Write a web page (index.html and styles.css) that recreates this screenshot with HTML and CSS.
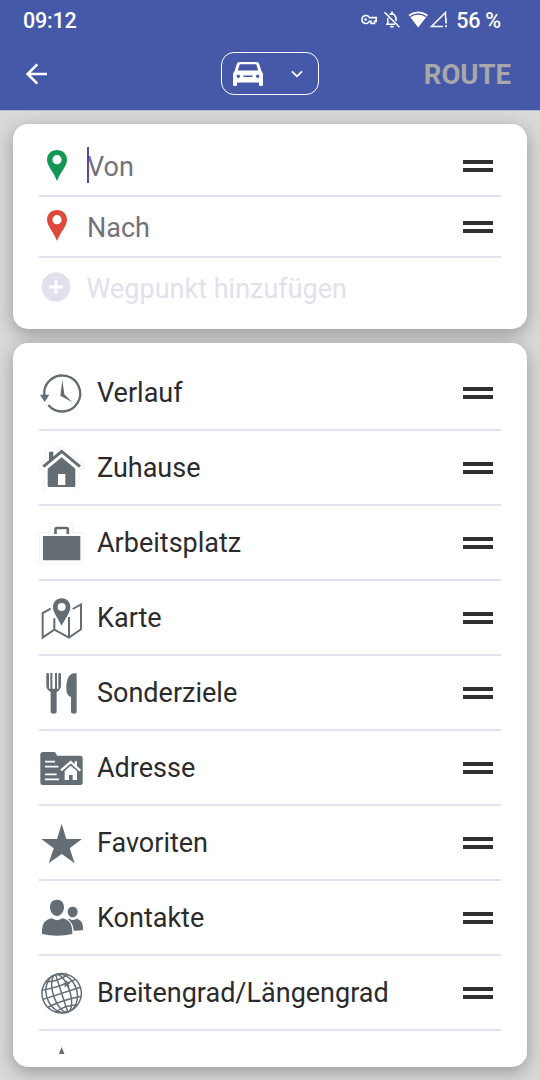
FILE: index.html
```html
<!DOCTYPE html>
<html lang="de">
<head>
<meta charset="UTF-8" />
<meta name="viewport" content="width=device-width, initial-scale=1.0" />
<title>Route</title>
<link rel="stylesheet" href="styles.css">
</head>
<body>

<header>
<!-- Statusleiste -->
<div class="status">
<span>09:12</span>
<div class="status-right">
<svg class="status-icons" viewBox="0 0 88 20" fill="none" stroke="#fff">
<path d="M9.4 7.6A4 4 0 1 0 9.4 11.4H11V13.5H14.5V11.4H16.2V7.6Z" stroke-width="1.6"/>
<circle cx="5.6" cy="9.5" r="1.3" fill="#fff" stroke="none"/>
<path d="M24.5 2.3L39.5 17.3" stroke-width="1.6"/>
<path d="M29.5 4.7Q32 3 34.3 4.9Q36 6.4 36 10V11M27.8 8V14.3H35M26 14.3H28" stroke-width="1.6"/>
<path d="M32 1.5V4M30.3 16.6H33.7" stroke-width="1.8"/>
<path d="M48.500 4.8Q58.200 -1.900 68 4.800L58.200 17.500Z" fill="#fff" stroke="none"/>
<path d="M50.300 6.600Q58.200 1.400 66.200 6.600" stroke="#4559a8" stroke-width="1.300"/>
<path d="M85.500 8V2.500L71.500 16.500H83" stroke-width="1.500"/>
<path d="M86 8V13.500M86 15V17.200" stroke-width="1.600"/>
</svg>
<span>56 %</span>
</div>
</div>
<!-- Navigation -->
<div class="toolbar">
<svg class="back" viewBox="0 0 24 24"><path d="M22 12H3M12.300 2.300L2.600 12L12.300 21.700" fill="none" stroke="#fff" stroke-width="2.500"/></svg>
<button class="vehicle">
<svg class="car" viewBox="0 0 30 26" fill="#fff">
<path fill-rule="evenodd" d="M6.500 1H23.500Q25.500 1 26 2.500L28.600 10.500Q30 11.500 30 13.500V23.500Q30 25 28.500 25H27.500Q26 25 26 23.500V21.500H4V23.500Q4 25 2.500 25H1.500Q0 25 0 23.500V13.500Q0 11.500 1.400 10.500L4 2.500Q4.500 1 6.500 1ZM6.800 3.200L4.700 9.500H25.300L23.200 3.200ZM5.300 13.500A1.700 1.700 0 1 0 5.300 16.900A1.700 1.700 0 1 0 5.300 13.500ZM24.700 13.500A1.700 1.700 0 1 0 24.700 16.900A1.700 1.700 0 1 0 24.700 13.500ZM10.500 14.400V15.900H19.500V14.400Z"/>
</svg>
<svg class="chevron" viewBox="0 0 12 8"><path d="M1 1.300L6 6.300L11 1.300" fill="none" stroke="#fff" stroke-width="1.800"/></svg>
</button>
<span class="route">ROUTE</span>
</div>
</header>

<main>

<!-- Wegpunkte -->
<section class="card waypoints">
<div class="point">
<svg class="pin green" viewBox="0 0 22 33"><path fill-rule="evenodd" d="M11 1C5.300 1 1 5.200 1 10.500C1 17 7 22 11 32C15 22 21 17 21 10.500C21 5.200 16.700 1 11 1ZM11 6.100A4.600 4.600 0 1 1 11 15.300A4.600 4.600 0 1 1 11 6.100Z"/></svg>
<span class="field focus">Von</span>
<i class="handle"></i>
</div>
<div class="point">
<svg class="pin red" viewBox="0 0 22 33"><path fill-rule="evenodd" d="M11 1C5.300 1 1 5.200 1 10.500C1 17 7 22 11 32C15 22 21 17 21 10.500C21 5.200 16.700 1 11 1ZM11 6.100A4.600 4.600 0 1 1 11 15.300A4.600 4.600 0 1 1 11 6.100Z"/></svg>
<span class="field">Nach</span>
<i class="handle"></i>
</div>
<div class="point add">
<svg class="plus" viewBox="0 0 30 30"><circle cx="15" cy="15" r="14.400" fill="#e2e0ec"/><path d="M15 7.700V22.300M7.700 15H22.300" stroke="#fff" stroke-width="2.800"/></svg>
<span class="field">Wegpunkt hinzufügen</span>
</div>
</section>

<!-- Ziele -->
<section class="card places">
<div class="list">
<div class="row">
<svg class="icon" viewBox="0 0 135 135">
<path d="M16 77A54 54 0 1 1 28 105" fill="none" stroke="#646c74" stroke-width="7"/>
<path d="M3 74H31L17 96ZM70 29L64 77L100 97L76 73Z"/>
</svg>
<span>Verlauf</span>
<i class="handle"></i>
</div>
<div class="row">
<svg class="icon" viewBox="0 0 135 135">
<path class="halo" d="M13 65L30 50V20H43V38L68 19L123 65L109 70V126H26V70Z"/>
<path class="halo-inner" d="M13 65L30 50V20H43V38L68 19L123 65L109 70V126H26V70Z"/>
<path d="M30 20H43V38L30 50Z"/>
<path d="M13 65L68 19L123 65" fill="none" stroke="#646c74" stroke-width="9"/>
<path fill-rule="evenodd" d="M68 37L109 71V122Q109 126 105 126H30Q26 126 26 122V71ZM57 87V120H79V87Z"/>
</svg>
<span>Zuhause</span>
<i class="handle"></i>
</div>
<div class="row">
<svg class="icon" viewBox="0 0 135 135">
<path class="halo" d="M12 48H46V20H90V48H124V121H12Z"/>
<path class="halo-inner" d="M12 48H46V20H90V48H124V121H12Z"/>
<path d="M12 48H124V121H12Z"/>
<path d="M49.500 42V28Q49.500 24 53 24H83Q86.500 24 86.500 28V42" fill="none" stroke="#646c74" stroke-width="8"/>
</svg>
<span>Arbeitsplatz</span>
<i class="handle"></i>
</div>
<div class="row">
<svg class="icon" viewBox="0 0 135 135">
<path d="M35 41L11 54V128L46 104L90 128L126 103V28L101 42M46 70V104M90 66V128" fill="none" stroke="#646c74" stroke-width="6"/>
<path fill-rule="evenodd" d="M68 10C52 10 42 21 42 36C42 52 55 67 68 92C81 67 94 52 94 36C94 21 84 10 68 10ZM68 24A12 12 0 1 1 68 48A12 12 0 1 1 68 24Z"/>
</svg>
<span>Karte</span>
<i class="handle"></i>
</div>
<div class="row">
<svg class="icon" viewBox="0 0 135 135">
<path d="M22 12Q22 9 26 9Q30 9 30 12V56H34V9H40V56H48V9H54V56H58V12Q58 9 62 9Q66 9 66 12V48Q66 59 53 66V127Q53 131 44 131Q35 131 35 127V66Q22 59 22 48Z"/>
<path d="M113 10V127Q113 131 104.500 131Q96 131 96 127V81Q82 77 82 56C82 28 88 7 113 10Z"/>
</svg>
<span>Sonderziele</span>
<i class="handle"></i>
</div>
<div class="row">
<svg class="icon" viewBox="0 0 135 135">
<path d="M12 21H45Q50 21 52 27L54 32H124Q131 32 131 39V113Q131 120 124 120H11Q4 120 4 113V29Q4 21 12 21Z"/>
<path d="M18 50H48M18 65H58M18 88H53M18 103H60" stroke="#fff" stroke-width="5"/>
<path d="M66 76L95 51L124 77" fill="none" stroke="#fff" stroke-width="7"/>
<path d="M95 62L114 78V105H101V90H90V105H77V78ZM107 49H114V65L107 59Z" fill="#fff"/>
</svg>
<span>Adresse</span>
<i class="handle"></i>
</div>
<div class="row">
<svg class="icon" viewBox="0 0 135 135">
<path d="M68 11L82 57H129L92 85L107 130L68 102L29 130L44 85L7 57H54Z"/>
</svg>
<span>Favoriten</span>
<i class="handle"></i>
</div>
<div class="row">
<svg class="icon" viewBox="0 0 135 135">
<path d="M54 14C40 14 33 23 33 37C33 51 43 63 54 63C65 63 75 51 75 37C75 23 68 14 54 14ZM9 117C8 90 14 75 38 70Q54 81 71 70C93 75 101 90 100 117Q55 127 9 117Z"/>
<path d="M101 35C91 35 86 41 86 50C86 59 93 67 101 67C109 67 116 59 116 50C116 41 111 35 101 35ZM87 73L91 71Q101 79 112 71C127 75 133 84 132 105Q118 108 104 107Q103 85 87 73Z"/>
</svg>
<span>Kontakte</span>
<i class="handle"></i>
</div>
<div class="row">
<svg class="icon" viewBox="0 0 135 135">
<g transform="rotate(-18 68 70)" fill="none" stroke="#646c74" stroke-width="4.500">
<circle cx="68" cy="70" r="59"/>
<path d="M68 11V129M9 70H127M16 43Q68 51 120 43M16 97Q68 89 120 97M34 22Q68 34 102 22M34 118Q68 106 102 118"/>
<ellipse cx="68" cy="70" rx="25" ry="59"/>
<ellipse cx="68" cy="70" rx="46" ry="59"/>
</g>
<path d="M83 30L86 38L94 38L89 44L92 52L83 48L75 52L78 44L72 38L80 38Z"/>
</svg>
<span>Breitengrad/Längengrad</span>
<i class="handle"></i>
</div>
<div class="row">
<svg class="icon" viewBox="0 0 135 135"><path d="M68 6L116 128L68 104L20 128Z"/></svg>
</div>
</div>
</section>

</main>

</body>
</html>
```
FILE: styles.css
```css
* {
  box-sizing: border-box;
}
body {
  margin: 0;
  height: 1080px;
  overflow: hidden;
  font-family: Roboto, "Liberation Sans", sans-serif;
  background: #d9d9d9;
  color: #2b2b2d;
}
svg {
  display: block;
  flex: none;
}

/* Kopfbereich */
header {
  height: 111px;
  background: #4559a8;
  border-bottom: 1px solid #b4b9d8;
  color: #fff;
}
.status {
  height: 40px;
  padding: 0 39px 0 23px;
  display: flex;
  justify-content: space-between;
  align-items: center;
  font-size: 21.5px;
  font-weight: 500;
  letter-spacing: -0.2px;
}
.status-right {
  display: flex;
  align-items: center;
  gap: 8px;
}
.status-icons {
  width: 88px;
  height: 20px;
}
.toolbar {
  height: 67px;
  padding: 0 29px 0 25px;
  display: grid;
  grid-template-columns: 196px 98px 1fr;
  align-items: center;
}
.back {
  width: 24px;
  height: 24px;
}
.vehicle {
  height: 43px;
  padding: 0 15px 0 11px;
  display: flex;
  justify-content: space-between;
  align-items: center;
  background: none;
  border: 1.5px solid #fff;
  border-radius: 13px;
}
.car {
  width: 30px;
  height: 26px;
}
.chevron {
  width: 12px;
  height: 8px;
}
.route {
  justify-self: end;
  padding-top: 2px;
  font-size: 27.5px;
  font-weight: 700;
  color: #a8a8a8;
}

/* Karten */
main {
  padding: 12.5px 13px 13px;
  display: flex;
  flex-direction: column;
  gap: 13.5px;
}
.card {
  padding: 13px 26px 12px;
  background: #fff;
  border-radius: 15px;
  box-shadow: 0 5px 18px rgba(0,0,0,0.3);
}
.waypoints {
  height: 205.5px;
}
.point {
  height: 60.5px;
  padding: 1px 8px 0 0;
  display: flex;
  align-items: center;
  border-bottom: 2px solid #e4e2f2;
  font-size: 27px;
  color: #73717b;
}
.point.add {
  height: 59px;
  border: none;
  color: #e2e0ec;
}
.pin {
  width: 22px;
  height: 33px;
  margin: -2px 19px 0 7px;
}
.green {
  fill: #149754;
}
.red {
  fill: #df493b;
}
.plus {
  width: 30px;
  height: 30px;
  margin: -1px 15.5px 0 2px;
}
.field {
  position: relative;
  padding-top: 2px;
}
.focus::before {
  content: "";
  position: absolute;
  left: 0;
  top: -2px;
  width: 2px;
  height: 36px;
  background: #5b45a5;
}
.handle {
  width: 30px;
  height: 12px;
  margin-left: auto;
  border-top: 4px solid #303030;
  border-bottom: 4px solid #303030;
}

/* Liste */
.places {
  height: 724px;
}
.list {
  height: 698px;
  overflow: hidden;
}
.row {
  height: 75px;
  padding: 1px 8px 0 0;
  display: flex;
  align-items: center;
  border-bottom: 2px solid #e4e2f2;
  font-size: 27px;
}
.icon {
  width: 45px;
  height: 45px;
  margin-right: 13px;
  fill: #646c74;
}
.halo {
  fill: #fff;
  stroke: #ececec;
  stroke-width: 24px;
  stroke-linejoin: round;
}
.halo-inner {
  fill: #fff;
  stroke: #fff;
  stroke-width: 20px;
  stroke-linejoin: round;
}
```
